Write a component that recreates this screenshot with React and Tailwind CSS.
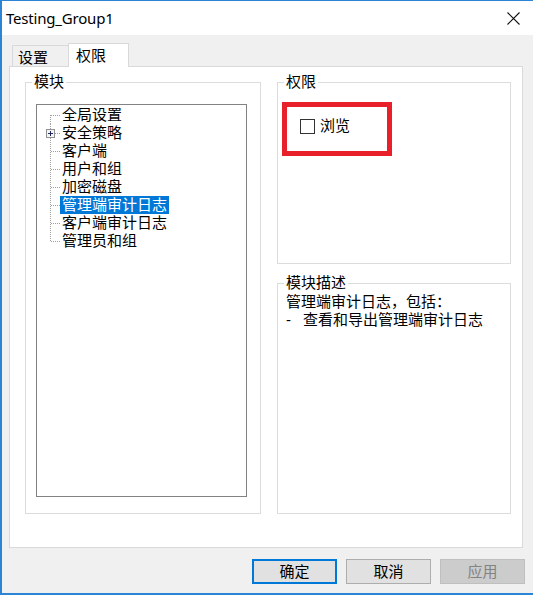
import React from 'react'

const font = "font-['Liberation_Sans','Noto_Sans_CJK_SC',sans-serif]"

const modules = [
  { label: '全局设置' },
  { label: '安全策略', collapsed: true },
  { label: '客户端' },
  { label: '用户和组' },
  { label: '加密磁盘' },
  { label: '管理端审计日志', selected: true },
  { label: '客户端审计日志' },
  { label: '管理员和组' },
]

// dotted connector drawn to the left of each tree row
const Connector = ({ first, last, collapsed }) => (
  <svg width="23" height="18" className="shrink-0">
    <line
      x1="13.5"
      y1={first ? 9 : 0}
      x2="13.5"
      y2={last ? 10 : 18}
      stroke="#a0a0a0"
      strokeDasharray="1 1"
    />
    <line x1={collapsed ? 18 : 14} y1="9.5" x2="23" y2="9.5" stroke="#a0a0a0" strokeDasharray="1 1" />
    {collapsed && (
      <g>
        <rect x="9.5" y="5.5" width="8" height="8" fill="#f4f4f4" stroke="#919191" />
        <line x1="11" y1="9.5" x2="16" y2="9.5" stroke="#1f2a5a" />
        <line x1="13.5" y1="7" x2="13.5" y2="12" stroke="#1f2a5a" />
      </g>
    )}
  </svg>
)

const GroupBox = ({ title, className, children }) => (
  <div className={`flex flex-col border border-[#dcdcdc] ${className}`}>
    <div className="-mt-[10px] ml-[6px] w-fit bg-white px-[2px] leading-[18px]">{title}</div>
    {children}
  </div>
)

const Button = ({ children, variant }) => {
  const styles = {
    primary: 'border-2 border-[#0078d7] bg-[#e1e1e1] text-black',
    normal: 'border border-[#adadad] bg-[#e1e1e1] text-black',
    disabled: 'border border-[#bfbfbf] bg-[#cccccc] text-[#838383]',
  }
  return (
    <div className={`flex h-[25px] w-[85px] items-center justify-center leading-none ${styles[variant]}`}>
      {children}
    </div>
  )
}

export default function App() {
  return (
    <div
      className={`flex h-[595px] w-[533px] flex-col border-t border-b-2 border-l-2 border-[#2c84d6] bg-[#f0f0f0] text-[15px] text-black ${font}`}
    >
      {/* title bar */}
      <div className="flex h-[34px] items-center justify-between bg-white pr-[13px] pl-[4px]">
        <span className="font-['Noto_Sans',sans-serif] text-[15px] tracking-[-0.2px]">Testing_Group1</span>
        <svg width="13" height="13" viewBox="0 0 13 13">
          <path d="M0.5 0.5 L12.5 12.5 M12.5 0.5 L0.5 12.5" stroke="#111" strokeWidth="1.1" />
        </svg>
      </div>

      <div className="flex flex-col pr-[10px] pl-[7px]">
        {/* tabs */}
        <div className="mt-[8px] ml-[3px] flex items-end">
          <div className="flex h-[21px] w-[56px] items-center border-t border-l border-[#d9d9d9] pt-[2px] pl-[5px] leading-none">
            设置
          </div>
          <div className="relative z-10 -mb-px flex h-[24px] w-[61px] items-center border-x border-t border-[#d9d9d9] bg-white pl-[7px] leading-none">
            权限
          </div>
        </div>

        {/* tab page */}
        <div className="flex h-[482px] gap-[16px] border border-[#d9d9d9] bg-white pt-[15px] pr-[11px] pl-[15px]">
          <GroupBox title="模块" className="h-[432px] w-[236px]">
            <div className="mt-[13px] ml-[10px] h-[393px] w-[211px] border border-[#828282] pt-px">
              {modules.map((m, i) => (
                <div key={m.label} className="flex h-[18px] items-center">
                  <Connector first={i === 0} last={i === modules.length - 1} collapsed={m.collapsed} />
                  <span
                    className={`h-[18px] px-[2px] leading-[18px] ${m.selected ? 'bg-[#0078d7] text-white' : ''}`}
                  >
                    {m.label}
                  </span>
                </div>
              ))}
            </div>
          </GroupBox>

          <div className="flex w-[234px] flex-col gap-[19px]">
            <GroupBox title="权限" className="h-[182px]">
              <div className="mt-[11px] ml-[4px] h-[54px] w-[110px] border-[5px] border-[#e8202a] pt-[10px] pl-[13px]">
                <div className="flex h-[18px] items-center gap-[5px]">
                  <span className="h-[15px] w-[15px] border border-[#333333] bg-white" />
                  <span className="leading-[18px]">浏览</span>
                </div>
              </div>
            </GroupBox>

            <GroupBox title="模块描述" className="h-[231px]">
              <div className="mt-px pl-[8px] leading-[18px]">
                <div>管理端审计日志，包括：</div>
                <div className="flex">
                  <span className="w-[17px]">-</span>
                  <span>查看和导出管理端审计日志</span>
                </div>
              </div>
            </GroupBox>
          </div>
        </div>
      </div>

      {/* dialog buttons */}
      <div className="mt-[11px] flex justify-end gap-[9px] pr-[8px]">
        <Button variant="primary">确定</Button>
        <Button variant="normal">取消</Button>
        <Button variant="disabled">应用</Button>
      </div>
    </div>
  )
}
